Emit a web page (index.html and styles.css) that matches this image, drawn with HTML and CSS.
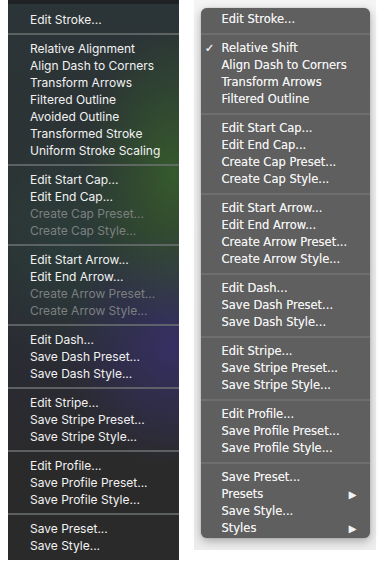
FILE: index.html
```html
<!DOCTYPE html>
<html>
<head>
<meta charset="utf-8">
<link rel="stylesheet" href="styles.css">
</head>
<body>
<div class="page">
  <div class="shot-dark">
    <div class="toolbar"></div>
    <div class="menu-dark">
      <div class="item">Edit Stroke...</div>
      <div class="sep"></div>
      <div class="item">Relative Alignment</div>
      <div class="item">Align Dash to Corners</div>
      <div class="item">Transform Arrows</div>
      <div class="item">Filtered Outline</div>
      <div class="item">Avoided Outline</div>
      <div class="item">Transformed Stroke</div>
      <div class="item">Uniform Stroke Scaling</div>
      <div class="sep"></div>
      <div class="item">Edit Start Cap...</div>
      <div class="item">Edit End Cap...</div>
      <div class="item off">Create Cap Preset...</div>
      <div class="item off">Create Cap Style...</div>
      <div class="sep"></div>
      <div class="item">Edit Start Arrow...</div>
      <div class="item">Edit End Arrow...</div>
      <div class="item off">Create Arrow Preset...</div>
      <div class="item off">Create Arrow Style...</div>
      <div class="sep"></div>
      <div class="item">Edit Dash...</div>
      <div class="item">Save Dash Preset...</div>
      <div class="item">Save Dash Style...</div>
      <div class="sep"></div>
      <div class="item">Edit Stripe...</div>
      <div class="item">Save Stripe Preset...</div>
      <div class="item">Save Stripe Style...</div>
      <div class="sep"></div>
      <div class="item">Edit Profile...</div>
      <div class="item">Save Profile Preset...</div>
      <div class="item">Save Profile Style...</div>
      <div class="sep"></div>
      <div class="item">Save Preset...</div>
      <div class="item">Save Style...</div>
    </div>
  </div>
  <div class="shot-gray">
    <div class="menu-gray">
      <div class="row"><span class="check"></span><span class="label">Edit Stroke...</span></div>
      <div class="gsep"></div>
      <div class="row"><span class="check">✓</span><span class="label">Relative Shift</span></div>
      <div class="row"><span class="check"></span><span class="label">Align Dash to Corners</span></div>
      <div class="row"><span class="check"></span><span class="label">Transform Arrows</span></div>
      <div class="row"><span class="check"></span><span class="label">Filtered Outline</span></div>
      <div class="gsep"></div>
      <div class="row"><span class="check"></span><span class="label">Edit Start Cap...</span></div>
      <div class="row"><span class="check"></span><span class="label">Edit End Cap...</span></div>
      <div class="row"><span class="check"></span><span class="label">Create Cap Preset...</span></div>
      <div class="row"><span class="check"></span><span class="label">Create Cap Style...</span></div>
      <div class="gsep"></div>
      <div class="row"><span class="check"></span><span class="label">Edit Start Arrow...</span></div>
      <div class="row"><span class="check"></span><span class="label">Edit End Arrow...</span></div>
      <div class="row"><span class="check"></span><span class="label">Create Arrow Preset...</span></div>
      <div class="row"><span class="check"></span><span class="label">Create Arrow Style...</span></div>
      <div class="gsep"></div>
      <div class="row"><span class="check"></span><span class="label">Edit Dash...</span></div>
      <div class="row"><span class="check"></span><span class="label">Save Dash Preset...</span></div>
      <div class="row"><span class="check"></span><span class="label">Save Dash Style...</span></div>
      <div class="gsep"></div>
      <div class="row"><span class="check"></span><span class="label">Edit Stripe...</span></div>
      <div class="row"><span class="check"></span><span class="label">Save Stripe Preset...</span></div>
      <div class="row"><span class="check"></span><span class="label">Save Stripe Style...</span></div>
      <div class="gsep"></div>
      <div class="row"><span class="check"></span><span class="label">Edit Profile...</span></div>
      <div class="row"><span class="check"></span><span class="label">Save Profile Preset...</span></div>
      <div class="row"><span class="check"></span><span class="label">Save Profile Style...</span></div>
      <div class="gsep"></div>
      <div class="row"><span class="check"></span><span class="label">Save Preset...</span></div>
      <div class="row"><span class="check"></span><span class="label">Presets</span><span class="sub">▶</span></div>
      <div class="row"><span class="check"></span><span class="label">Save Style...</span></div>
      <div class="row"><span class="check"></span><span class="label">Styles</span><span class="sub">▶</span></div>
    </div>
  </div>
</div>
</body>
</html>
```
FILE: styles.css
```css
html, body {
  margin: 0;
  padding: 0;
  background: #ffffff;
}
.page {
  display: flex;
  align-items: flex-start;
  width: 379px;
  height: 566px;
  overflow: hidden;
}
.shot-dark {
  margin-left: 8px;
  width: 171px;
  height: 560px;
  display: flex;
  flex-direction: column;
  background:
    radial-gradient(ellipse 90px 150px at 165px 175px, rgba(60, 115, 40, 0.6), rgba(60, 115, 40, 0) 100%),
    radial-gradient(ellipse 110px 120px at 165px 345px, rgba(60, 50, 125, 0.65), rgba(60, 50, 125, 0) 100%),
    radial-gradient(ellipse 90px 120px at 60px 250px, rgba(40, 80, 70, 0.35), rgba(40, 80, 70, 0) 100%),
    linear-gradient(180deg, #2b3437 0%, #2c3333 40%, #2a2b33 65%, #2a2a2a 85%, #2a2a2a 100%);
}
.toolbar {
  height: 4px;
  background: #1e2224;
  flex: none;
}
.menu-dark {
  padding: 7px 0 0 0;
  display: flex;
  flex-direction: column;
  font-family: Inter, "Liberation Sans", sans-serif;
  font-size: 12px;
  color: #f2f2f2;
}
.item {
  height: 17px;
  line-height: 17px;
  padding-left: 22px;
  white-space: nowrap;
}
.item.off {
  color: #7d8080;
}
.sep {
  height: 2px;
  margin: 5px 0;
  background: rgba(110, 115, 115, 0.75);
}
.shot-gray {
  margin-left: 15px;
  width: 182px;
  height: 550px;
  background: linear-gradient(180deg, #f4f4f4 0%, #efefef 60%, #ededed 100%);
  display: flex;
  justify-content: center;
  align-items: flex-start;
  padding-top: 8px;
  box-sizing: border-box;
}
.menu-gray {
  width: 169px;
  background: #5f5f5f;
  border-radius: 6px;
  box-shadow: 0 3px 10px rgba(0, 0, 0, 0.3), 0 0 1px rgba(0, 0, 0, 0.4);
  padding: 3px 0 1px 0;
  display: flex;
  flex-direction: column;
  font-family: "DejaVu Sans", "Liberation Sans", sans-serif;
  font-size: 11.5px;
  color: #f2f2f2;
  text-shadow: 0 0 0.6px rgba(255, 255, 255, 0.7);
}
.row {
  height: 17px;
  line-height: 17px;
  display: flex;
  align-items: center;
  white-space: nowrap;
}
.check {
  width: 21px;
  flex: none;
  text-align: right;
  padding-right: 7px;
  box-sizing: border-box;
}
.label {
  flex: 1;
}
.sub {
  font-size: 10px;
  padding-right: 13px;
}
.gsep {
  height: 2px;
  margin: 5px 0;
  background: #6e6e6e;
}
```
